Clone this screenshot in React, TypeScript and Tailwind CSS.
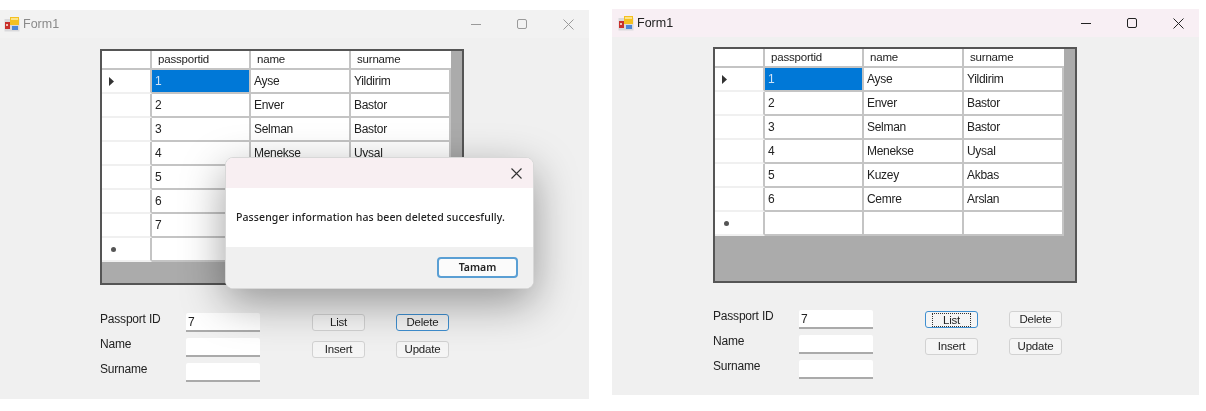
import React from 'react';

const columns = ['passportid', 'name', 'surname'];

const leftRows = [
  ['1', 'Ayse', 'Yildirim'],
  ['2', 'Enver', 'Bastor'],
  ['3', 'Selman', 'Bastor'],
  ['4', 'Menekse', 'Uysal'],
  ['5', 'Kuzey', 'Akbas'],
  ['6', 'Cemre', 'Arslan'],
  ['7', 'Ali', 'Demir'],
];

const rightRows = leftRows.slice(0, 6);

const AppIcon = () => (
  <svg width="16" height="16" viewBox="0 0 16 16" className="shrink-0">
    <rect x="0.5" y="3" width="15" height="12.5" fill="#d9d9dc" />
    <rect x="1" y="6" width="5" height="7" fill="#c8302c" />
    <rect x="2" y="8" width="2" height="2" fill="#f2c4b8" />
    <rect x="6" y="1" width="9" height="8" fill="#f4c021" />
    <rect x="7" y="2" width="7" height="2" fill="#fbe48a" />
    <rect x="8" y="10" width="6" height="4" fill="#4d86d6" />
  </svg>
);

const WindowControls = ({ color }: { color: string }) => (
  <div className="flex items-center gap-[36px] pr-[15px]">
    <svg width="10" height="10" viewBox="0 0 10 10">
      <path d="M0 5.5H10" stroke={color} strokeWidth="1" />
    </svg>
    <svg width="10" height="10" viewBox="0 0 10 10">
      <rect x="0.5" y="0.5" width="9" height="9" rx="1.5" fill="none" stroke={color} strokeWidth="1" />
    </svg>
    <svg width="11" height="11" viewBox="0 0 11 11">
      <path d="M0.5 0.5L10.5 10.5M10.5 0.5L0.5 10.5" stroke={color} strokeWidth="1" />
    </svg>
  </div>
);

const HeaderCell = ({ children, last }: { children?: React.ReactNode; last?: boolean }) => (
  <div className={`flex h-[19px] items-center bg-white pl-[6px] text-[11.5px] tracking-[-0.2px] text-[#222] border-b-2 border-[#c4c4c4] ${last ? '' : 'border-r-2'}`}>
    {children}
  </div>
);

const RowHeader = ({ marker }: { marker?: 'arrow' | 'star' }) => (
  <div className="flex h-[24px] items-center bg-white pl-[7px] border-r-2 border-b-2 border-b-[#f0f0f0] border-r-[#c4c4c4]">
    {marker === 'arrow' && (
      <svg width="5" height="9" viewBox="0 0 5 9">
        <path d="M0 0L5 4.5L0 9Z" fill="#333" />
      </svg>
    )}
    {marker === 'star' && <div className="ml-[2px] h-[5px] w-[5px] rounded-full bg-[#555]" />}
  </div>
);

const DataCell = ({ children, selected }: { children?: React.ReactNode; selected?: boolean }) => (
  <div className={`flex h-[24px] items-center pl-[3px] text-[12px] tracking-[-0.3px] border-r-2 border-b-2 border-[#c4c4c4] ${selected ? 'bg-[#0078d7] text-[#cfe4f7]' : 'bg-white text-[#222]'}`}>
    {children}
  </div>
);

const DataGrid = ({ rows }: { rows: string[][] }) => (
  <div className="h-[236px] w-[364px] border-2 border-[#555] bg-[#ababab]">
    <div className="grid w-[349px] grid-cols-[50px_99px_100px_100px]">
      <HeaderCell />
      {columns.map((c, i) => (
        <HeaderCell key={c} last={i === 2}>
          {c}
        </HeaderCell>
      ))}
      {rows.map((r, i) => (
        <React.Fragment key={r[0]}>
          <RowHeader marker={i === 0 ? 'arrow' : undefined} />
          <DataCell selected={i === 0}>{r[0]}</DataCell>
          <DataCell>{r[1]}</DataCell>
          <DataCell>{r[2]}</DataCell>
        </React.Fragment>
      ))}
      <RowHeader marker="star" />
      <DataCell />
      <DataCell />
      <DataCell />
    </div>
  </div>
);

const Field = ({ label, value }: { label: string; value?: string }) => (
  <div className="flex h-[19px] items-center">
    <span className="w-[86px] -translate-y-[4px] text-[12px] tracking-[-0.2px] text-[#222]">{label}</span>
    <div className="flex h-[19px] w-[74px] items-center border-b-2 border-[#aaa] bg-white pl-[2px] text-[12px] text-[#222] rounded-t-[2px]">
      {value}
    </div>
  </div>
);

const FormButton = ({ label, state }: { label: string; state?: 'focus' | 'dotted' }) => (
  <div
    className={`flex h-[17px] w-[53px] items-center justify-center rounded-[3px] bg-[#f5f5f5] text-[11.5px] tracking-[-0.2px] text-[#222] border ${
      state ? 'border-[#3f8fd0] border-[1.5px]' : 'border-[#d2d2d2]'
    }`}
  >
    {state === 'dotted' ? <span className="border border-dotted border-[#333] px-[10px] leading-[12px]">{label}</span> : label}
  </div>
);

const FormArea = ({ focus }: { focus: 'list' | 'delete' }) => (
  <div className="flex">
    <div className="flex w-[212px] flex-col gap-[6px]">
      <Field label="Passport ID" value="7" />
      <Field label="Name" />
      <Field label="Surname" />
    </div>
    <div className="grid h-fit grid-cols-[53px_53px] gap-x-[31px] gap-y-[10px] pt-[1px]">
      <FormButton label="List" state={focus === 'list' ? 'dotted' : undefined} />
      <FormButton label="Delete" state={focus === 'delete' ? 'focus' : undefined} />
      <FormButton label="Insert" />
      <FormButton label="Update" />
    </div>
  </div>
);

const MessageBox = () => (
  <div className="absolute left-[225px] top-[147px] z-10 w-[309px] overflow-hidden rounded-[8px] border border-[#d8d8d8] bg-white shadow-[0_14px_44px_rgba(0,0,0,0.38)] font-['Noto_Sans',sans-serif]">
    <div className="flex h-[30px] items-center justify-end bg-[#f8eff2] pr-[11px]">
      <svg width="11" height="11" viewBox="0 0 11 11">
        <path d="M0.5 0.5L10.5 10.5M10.5 0.5L0.5 10.5" stroke="#333" strokeWidth="1.1" />
      </svg>
    </div>
    <div className="flex h-[59px] items-center pl-[10px] text-[10.5px] font-medium tracking-[0.01em] text-[#222]">
      Passenger information has been deleted succesfully.
    </div>
    <div className="flex h-[41px] items-center justify-end bg-[#f0f0f0] pr-[15px]">
      <div className="flex h-[21px] w-[81px] items-center justify-center rounded-[4px] border-2 border-[#5a9fd4] bg-[#fbfbfb] text-[10.5px] font-semibold text-[#222]">
        Tamam
      </div>
    </div>
  </div>
);

export default function App() {
  return (
    <div className="flex h-[411px] w-[1206px] items-start overflow-hidden bg-white font-['Liberation_Sans',sans-serif] blur-[0.35px]">
      {/* inactive window with the message box on top */}
      <div className="relative mt-[10px] h-[389px] w-[589px] bg-[#f0f0f0]">
        <div className="flex h-[28px] items-center justify-between bg-[#f2f2f2] pl-[4px]">
          <div className="flex items-center gap-[3px] text-[12.5px] text-[#8a8a8a]">
            <AppIcon />
            Form1
          </div>
          <WindowControls color="#9a9a9a" />
        </div>
        <div className="pl-[100px] pt-[11px]">
          <DataGrid rows={leftRows} />
          <div className="pt-[28px]">
            <FormArea focus="delete" />
          </div>
        </div>
        <MessageBox />
      </div>

      <div className="relative ml-[23px] mt-[9px] h-[386px] w-[587px] bg-[#f0f0f0]">
        <div className="flex h-[28px] items-center justify-between bg-[#f8eff4] pl-[6px]">
          <div className="flex items-center gap-[3px] text-[12.5px] text-[#222]">
            <AppIcon />
            Form1
          </div>
          <WindowControls color="#222" />
        </div>
        <div className="pl-[101px] pt-[10px]">
          <DataGrid rows={rightRows} />
          <div className="pt-[27px]">
            <FormArea focus="list" />
          </div>
        </div>
      </div>
    </div>
  );
}
